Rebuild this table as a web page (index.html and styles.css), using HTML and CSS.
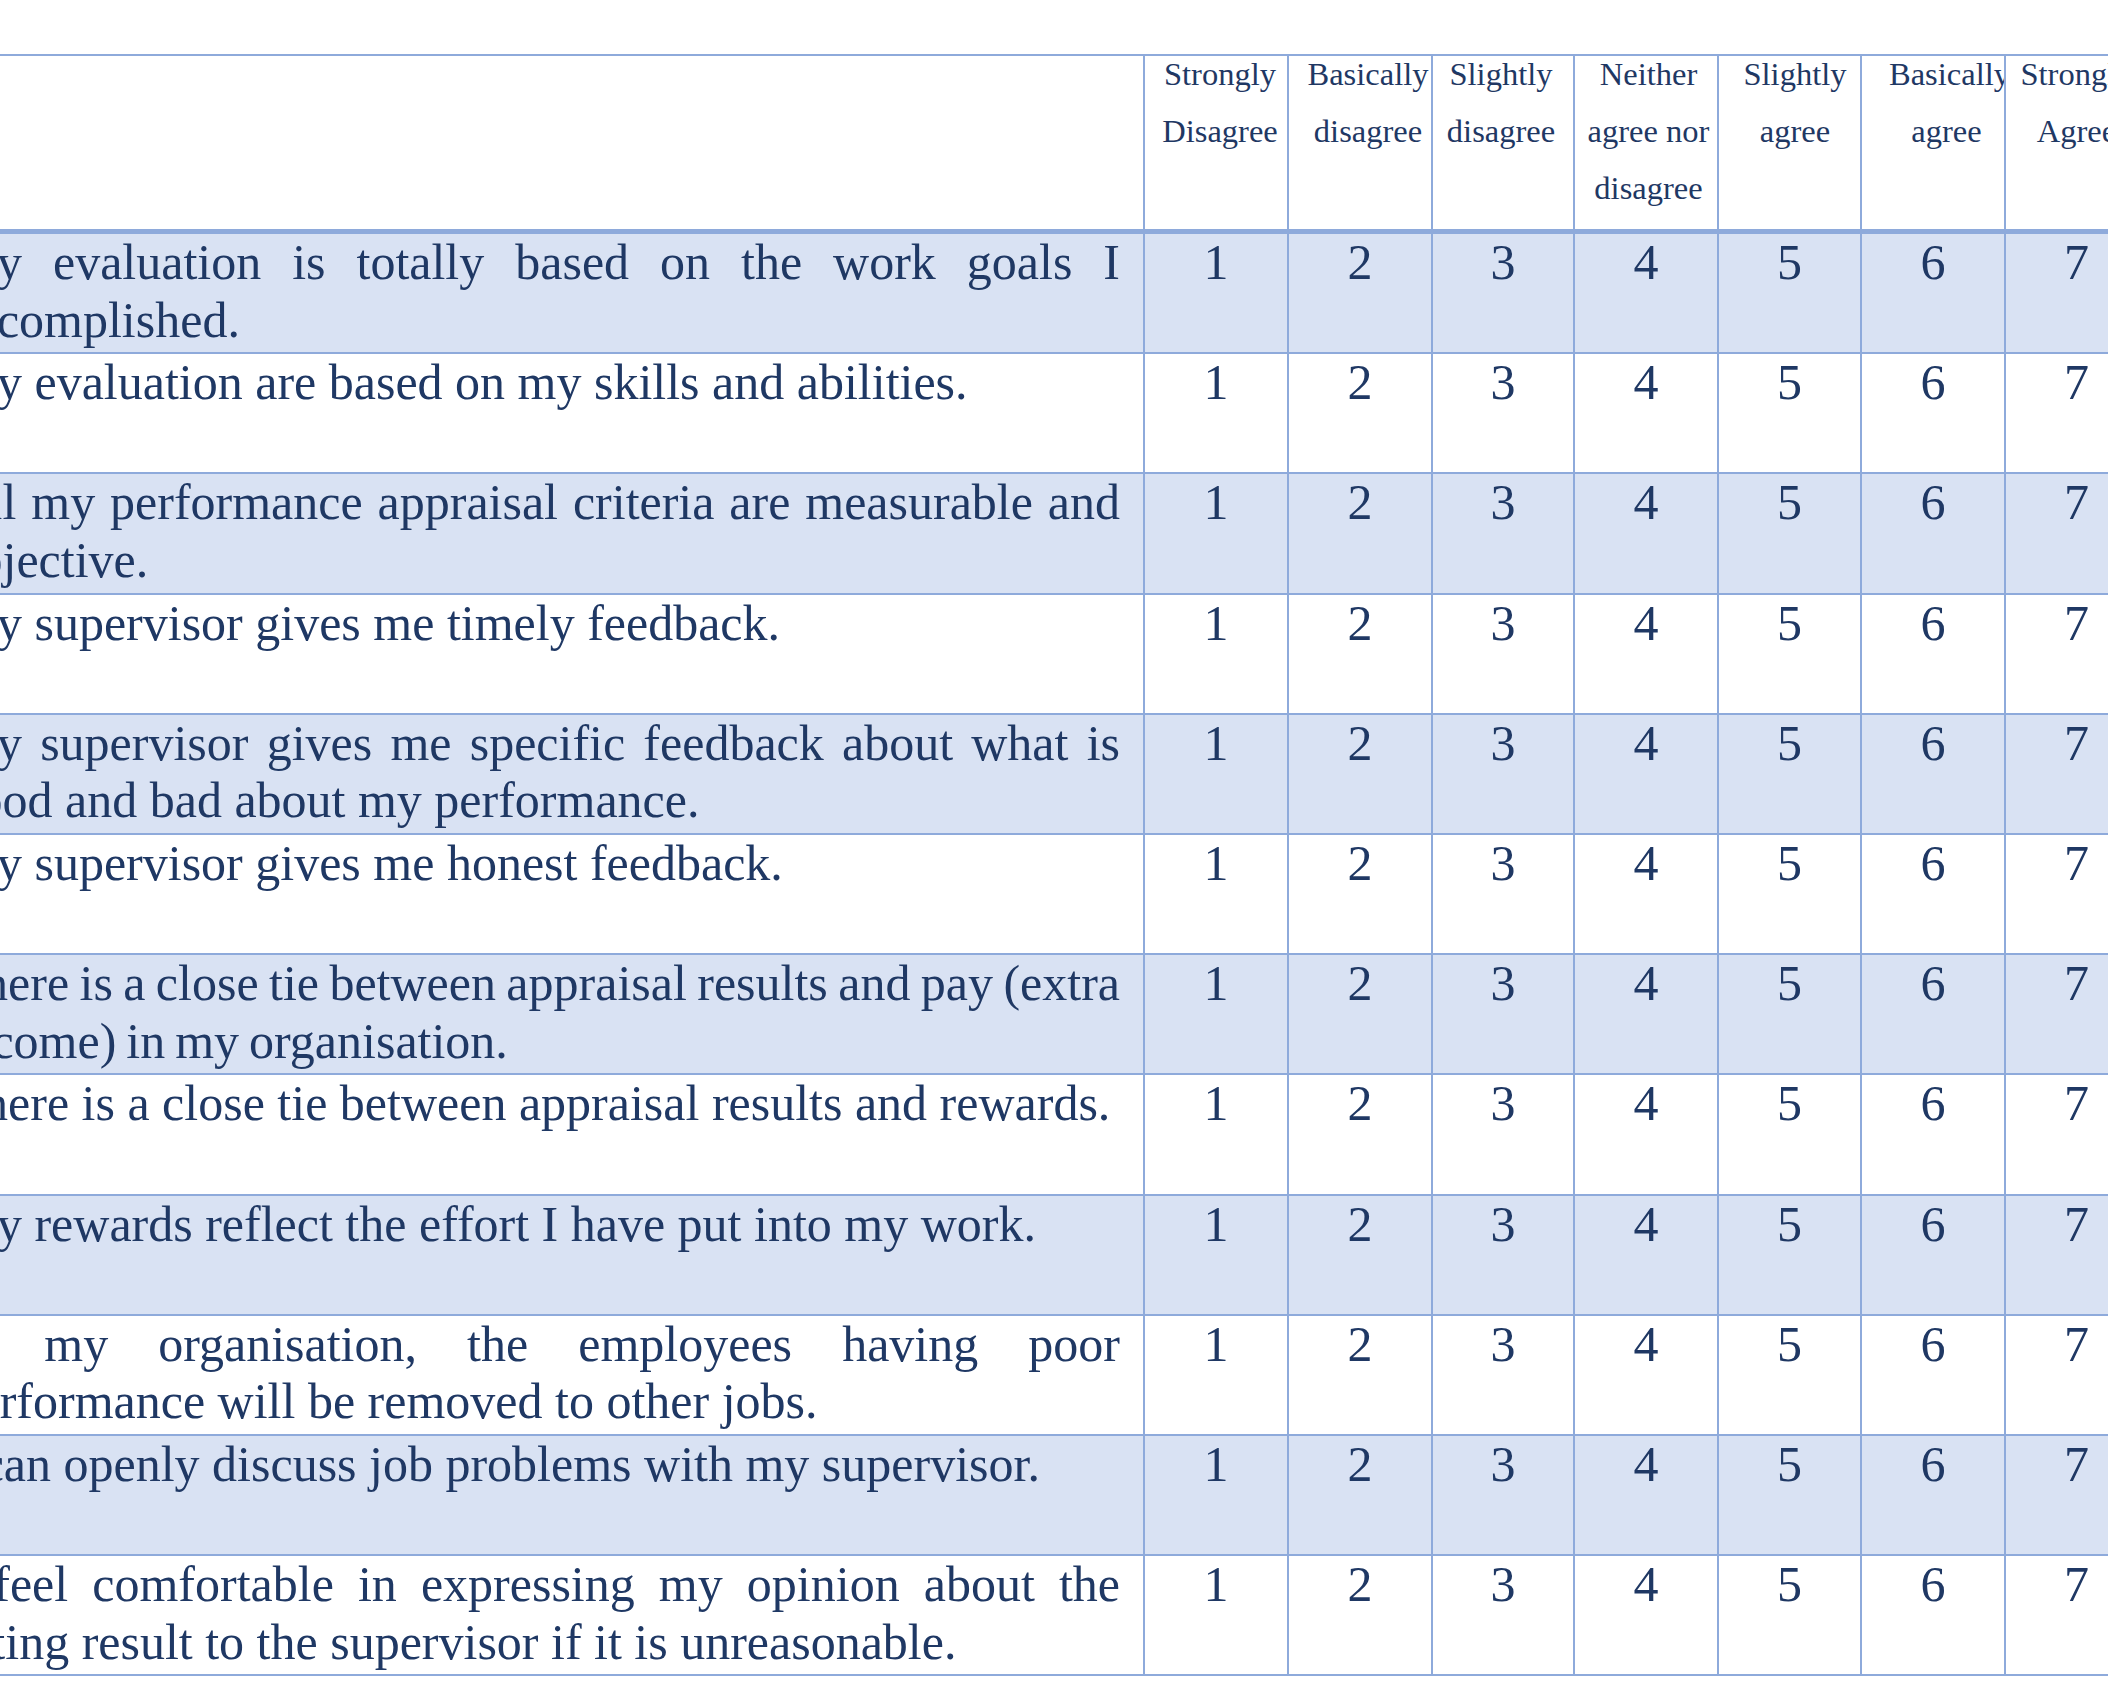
FILE: index.html
```html
<!DOCTYPE html>
<html lang="en">
<head>
<meta charset="utf-8">
<title>Performance appraisal survey</title>
<link rel="stylesheet" href="styles.css">
</head>
<body>
<div class="page">
<table class="survey">
  <thead>
    <tr class="head">
      <th class="stmt-head"></th>
      <th class="r1"><div class="hd">Strongly Disagree</div></th>
      <th class="r2"><div class="hd">Basically disagree</div></th>
      <th class="r3"><div class="hd">Slightly disagree</div></th>
      <th class="r4"><div class="hd">Neither agree nor disagree</div></th>
      <th class="r5"><div class="hd">Slightly agree</div></th>
      <th class="r6"><div class="hd">Basically agree</div></th>
      <th class="r7"><div class="hd">Strongly Agree</div></th>
    </tr>
  </thead>
  <tbody>
    <tr class="band"><td class="stmt">My evaluation is totally based on the work goals I accomplished.</td><td>1</td><td>2</td><td>3</td><td>4</td><td>5</td><td>6</td><td>7</td></tr>
    <tr><td class="stmt">My evaluation are based on my skills and abilities.</td><td>1</td><td>2</td><td>3</td><td>4</td><td>5</td><td>6</td><td>7</td></tr>
    <tr class="band"><td class="stmt">All my performance appraisal criteria are measurable and objective.</td><td>1</td><td>2</td><td>3</td><td>4</td><td>5</td><td>6</td><td>7</td></tr>
    <tr><td class="stmt">My supervisor gives me timely feedback.</td><td>1</td><td>2</td><td>3</td><td>4</td><td>5</td><td>6</td><td>7</td></tr>
    <tr class="band"><td class="stmt">My supervisor gives me specific feedback about what is good and bad about my performance.</td><td>1</td><td>2</td><td>3</td><td>4</td><td>5</td><td>6</td><td>7</td></tr>
    <tr><td class="stmt">My supervisor gives me honest feedback.</td><td>1</td><td>2</td><td>3</td><td>4</td><td>5</td><td>6</td><td>7</td></tr>
    <tr class="band"><td class="stmt tight">There is a close tie between appraisal results and pay (extra income) in my organisation.</td><td>1</td><td>2</td><td>3</td><td>4</td><td>5</td><td>6</td><td>7</td></tr>
    <tr><td class="stmt">There is a close tie between appraisal results and rewards.</td><td>1</td><td>2</td><td>3</td><td>4</td><td>5</td><td>6</td><td>7</td></tr>
    <tr class="band"><td class="stmt">My rewards reflect the effort I have put into my work.</td><td>1</td><td>2</td><td>3</td><td>4</td><td>5</td><td>6</td><td>7</td></tr>
    <tr><td class="stmt">In my organisation, the employees having poor performance will be removed to other jobs.</td><td>1</td><td>2</td><td>3</td><td>4</td><td>5</td><td>6</td><td>7</td></tr>
    <tr class="band"><td class="stmt">I can openly discuss job problems with my supervisor.</td><td>1</td><td>2</td><td>3</td><td>4</td><td>5</td><td>6</td><td>7</td></tr>
    <tr><td class="stmt">I feel comfortable in expressing my opinion about the rating result to the supervisor if it is unreasonable.</td><td>1</td><td>2</td><td>3</td><td>4</td><td>5</td><td>6</td><td>7</td></tr>
  </tbody>
</table>
</div>
</body>
</html>
```
FILE: styles.css
```css
html, body {
  margin: 0;
  padding: 0;
  background: #ffffff;
  overflow: hidden;
}

.page {
  padding-top: 54px;
}

.survey {
  border-collapse: separate;
  border-spacing: 0;
  table-layout: fixed;
  width: 2209px;
  margin-left: -60px;
  border-top: 2px solid #8eaadb;
  font-family: "Liberation Serif", "Times New Roman", serif;
  color: #1f3864;
}

.survey th,
.survey td {
  box-sizing: border-box;
  padding: 0;
  border-right: 2px solid #8eaadb;
  border-bottom: 2px solid #8eaadb;
  vertical-align: top;
}

/* header */
.head th {
  height: 178px;
  border-bottom: 5px solid #8eaadb;
  font-weight: normal;
  font-size: 32.5px;
  line-height: 57px;
  text-align: center;
}

.hd {
  margin-top: -10px;
  overflow: hidden;
}

.stmt-head { width: 1205px; }
.r1 { width: 144px; padding-left: 8px !important; }
.r2 { width: 144px; padding-left: 16px !important; }
.r3 { width: 142px; padding-right: 4px !important; }
.r4 { width: 144px; padding-left: 5px !important; }
.r5 { width: 143px; padding-left: 11px !important; }
.r6 { width: 144px; padding-left: 27px !important; }
.r7 { width: 143px; }

/* body */
.survey tbody td {
  height: 120.2px;
  font-size: 50px;
  line-height: 57.5px;
  text-align: center;
}

.survey tbody td.stmt {
  text-align: justify;
  padding-left: 12.5px;
  padding-right: 23px;
}

.tight {
  word-spacing: -2.5px;
}

.band td {
  background: #d9e2f3;
}
```
